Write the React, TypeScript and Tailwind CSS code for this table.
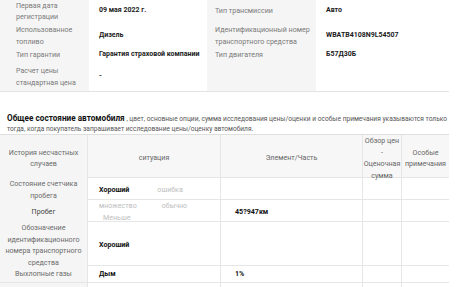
export default function App() {
  const label = "flex items-center bg-[#f5f5f5] text-[#7a7a7a] text-[7.1px]";
  const value = "flex items-center font-bold text-[#1a1a1a] text-[7px]";
  const row = "grid grid-cols-[88px_133px_142px_39px_47px] border-b border-[#e6e6e6]";
  const cell = "flex items-center border-r border-[#e6e6e6]";
  const first = "flex items-center justify-center text-center bg-[#f5f5f5] text-[#6b6b6b] border-r border-[#e6e6e6]";

  return (
    <div className="w-[456px] h-[287px] overflow-hidden bg-white font-['Roboto',sans-serif] text-[7.1px] leading-[11.5px]">
      <div className="w-[449px] -mt-px grid grid-cols-[89px_118px_109px_133px] grid-rows-[24px_25px_14px_29px] border-b border-[#e3e3e3]">
        <div className={`${label} pl-4`}>Первая дата<br />регистрации</div>
        <div className={`${value} pl-[10px]`}>09 мая 2022 г.</div>
        <div className={`${label} pl-2`}>Тип трансмиссии</div>
        <div className={`${value} pl-[10px]`}>Авто</div>

        <div className={`${label} pl-4`}>Использованное<br />топливо</div>
        <div className={`${value} pl-[10px]`}>Дизель</div>
        <div className={`${label} pl-2`}>Идентификационный номер<br />транспортного средства</div>
        <div className={`${value} pl-[10px]`}>WBATB4108N9L54507</div>

        <div className={`${label} pl-4`}>Тип гарантии</div>
        <div className={`${value} pl-[10px]`}>Гарантия страховой компании</div>
        <div className={`${label} pl-2`}>Тип двигателя</div>
        <div className={`${value} pl-[10px]`}>Б57Д30Б</div>

        <div className={`${label} pl-4`}>Расчет цены<br />стандартная цена</div>
        <div className={`${value} pl-[10px]`}>-</div>
        <div className={label}></div>
        <div className={value}></div>
      </div>

      <div className="pt-[21px] pl-[7px] pr-[9px] leading-[10px] text-[6.6px] text-[#555]">
        <div className="text-justify [text-align-last:justify]">
          <span className="text-[8.2px] font-bold text-[#111]">Общее состояние автомобиля</span>
          {" "}, цвет, основные опции, сумма исследования цены/оценки и особые примечания указываются только
        </div>
        <div>тогда, когда покупатель запрашивает исследование цены/оценку автомобиля.</div>
      </div>

      <div className="w-[449px] border-t border-[#dedede]">
        <div className={`${row} h-[43px] bg-[#f7f7f7] text-[#666]`}>
          <div className={`${first} px-1`}>История несчастных<br />случаев</div>
          <div className={`${cell} justify-center`}>ситуация</div>
          <div className={`${cell} justify-center`}>Элемент/Часть</div>
          <div className={`${cell} justify-center text-center`}>Обзор цен<br />-<br />Оценочная<br />сумма</div>
          <div className="flex items-center justify-center text-center">Особые<br />примечания</div>
        </div>

        <div className={`${row} h-[22px]`}>
          <div className={first}>Состояние счетчика<br />пробега</div>
          <div className={`${cell} pl-[11px]`}>
            <span className="font-bold text-[#111]">Хороший</span>
            <span className="ml-[28px] text-[#bdbdbd]">ошибка</span>
          </div>
          <div className={cell}></div>
          <div className={cell}></div>
          <div></div>
        </div>

        <div className={`${row} h-[22px]`}>
          <div className={`${first} !text-[#444]`}>Пробег</div>
          <div className={`${cell} flex-col !items-start justify-center pl-[11px] text-[#bdbdbd]`}>
            <div>
              <span>множество</span>
              <span className="ml-[25px]">обычно</span>
            </div>
            <span className="ml-[4px]">Меньше</span>
          </div>
          <div className={`${cell} pl-[14px] font-bold text-[#111]`}>45?947км</div>
          <div className={cell}></div>
          <div></div>
        </div>

        <div className={`${row} h-[44px]`}>
          <div className={first}>Обозначение<br />идентификационного<br />номера транспортного<br />средства</div>
          <div className={`${cell} pl-[11px] font-bold text-[#111]`}>Хороший</div>
          <div className={cell}></div>
          <div className={cell}></div>
          <div></div>
        </div>

        <div className={`${row} h-[17px]`}>
          <div className={first}>Выхлопные газы</div>
          <div className={`${cell} pl-[11px] font-bold text-[#111]`}>Дым</div>
          <div className={`${cell} pl-[14px] font-bold text-[#111]`}>1%</div>
          <div className={cell}></div>
          <div></div>
        </div>

        <div className={`${row} h-[22px]`}>
          <div className={first}></div>
          <div className={cell}></div>
          <div className={cell}></div>
          <div className={cell}></div>
          <div></div>
        </div>
      </div>
    </div>
  );
}
